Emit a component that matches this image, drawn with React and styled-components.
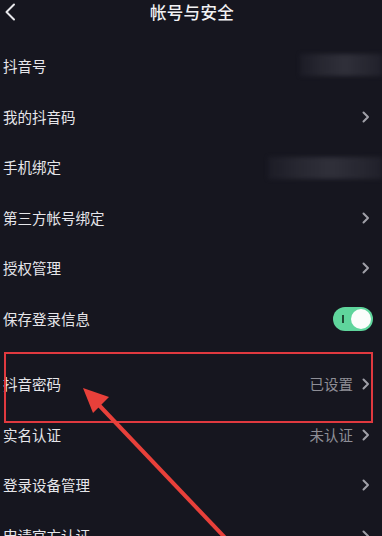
import React from 'react';
import styled, { createGlobalStyle } from 'styled-components';

const GlobalStyle = createGlobalStyle`
    html, body {
        margin: 0;
        padding: 0;
        background: #16161f;
    }
    body {
        font-family: "Noto Sans CJK SC", "Noto Sans", sans-serif;
        overflow: hidden;
    }
`

const Page = styled.div`
    position: relative;
    width: 382px;
    height: 536px;
    overflow: hidden;
    background: #16161f;
    color: #e6e6ea;
`

const Header = styled.div`
    position: relative;
    height: 24px;
    display: flex;
    align-items: center;
    justify-content: center;
    margin-bottom: 17px;
`

const BackButton = styled.div`
    position: absolute;
    left: 3px;
    top: 3px;
    width: 14px;
    height: 18px;
    display: flex;
`

const Title = styled.div`
    font-size: 16.5px;
    font-weight: 500;
    color: #f2f2f4;
    letter-spacing: 0.3px;
    line-height: 24px;
    margin-left: 2px;
`

const List = styled.div`
    display: flex;
    flex-direction: column;
`

const Row = styled.div`
    position: relative;
    height: 50.5px;
    display: flex;
    align-items: center;
    justify-content: space-between;
    padding-left: 3px;
    padding-right: 12px;
    margin-top: ${props => (props.gap ? '15px' : '0')};
`

const Label = styled.div`
    font-size: 14.5px;
    color: #e6e6ea;
    line-height: 20px;
`

const Right = styled.div`
    display: flex;
    align-items: center;
    gap: 9px;
`

const Value = styled.span`
    font-size: 14.5px;
    color: #8e8e96;
    line-height: 20px;
`

const Blurred = styled.div`
    position: relative;
    width: ${props => props.w}px;
    height: 22px;
    margin-right: -12px;
    margin-top: ${props => props.offset || 0}px;
    background: linear-gradient(90deg, #1d1d27 0%, #2b2b35 30%, #33333d 55%, #2a2a34 80%, #22222c 100%);
    filter: blur(2px);
    opacity: 0.9;
`

const Toggle = styled.div`
    position: relative;
    width: 40px;
    height: 24px;
    border-radius: 12px;
    background: #5fd59c;
    margin-right: -3px;
`

const ToggleMark = styled.div`
    position: absolute;
    left: 9px;
    top: 8px;
    width: 1.5px;
    height: 8px;
    background: #1f4a34;
`

const Knob = styled.div`
    position: absolute;
    right: 2px;
    top: 2px;
    width: 20px;
    height: 20px;
    border-radius: 50%;
    background: #fbfdfb;
`

const Highlight = styled.div`
    position: absolute;
    left: 4px;
    top: 352px;
    width: 369px;
    height: 71px;
    border: 2.5px solid #e0393f;
    box-sizing: border-box;
    pointer-events: none;
`

const ArrowLayer = styled.svg`
    position: absolute;
    left: 0;
    top: 0;
    pointer-events: none;
`

function Chevron() {
    return (
        <svg width="8" height="12" viewBox="0 0 8 12">
            <path d="M1.5 1.5 L6 6 L1.5 10.5" fill="none" stroke="#a0a0a8" strokeWidth="2" strokeLinecap="round" strokeLinejoin="round" />
        </svg>
    );
}

const rows = [
    { label: '抖音号', blur: 82, offset: -3 },
    { label: '我的抖音码', chevron: true },
    { label: '手机绑定', blur: 114, offset: 2 },
    { label: '第三方帐号绑定', chevron: true },
    { label: '授权管理', chevron: true },
    { label: '保存登录信息', toggle: true },
    { label: '抖音密码', value: '已设置', chevron: true, gap: true },
    { label: '实名认证', value: '未认证', chevron: true },
    { label: '登录设备管理', chevron: true },
    { label: '申请官方认证', chevron: true },
];

export default function App() {
    return (
        <Page>
            <GlobalStyle />
            <Header>
                <BackButton>
                    <svg width="14" height="18" viewBox="0 0 14 18">
                        <path d="M11 1.5 L3.5 9 L11 16.5" fill="none" stroke="#e8e8ec" strokeWidth="2" strokeLinecap="round" strokeLinejoin="round" />
                    </svg>
                </BackButton>
                <Title>帐号与安全</Title>
            </Header>
            <List>
                {rows.map(row => (
                    <Row key={row.label} gap={row.gap ? 1 : 0}>
                        <Label>{row.label}</Label>
                        <Right>
                            {row.value && <Value>{row.value}</Value>}
                            {row.blur && <Blurred w={row.blur} offset={row.offset} />}
                            {row.toggle && (
                                <Toggle>
                                    <ToggleMark />
                                    <Knob />
                                </Toggle>
                            )}
                            {row.chevron && <Chevron />}
                        </Right>
                    </Row>
                ))}
            </List>
            <Highlight />
            <ArrowLayer width="382" height="536" viewBox="0 0 382 536">
                <line x1="232" y1="545" x2="96" y2="402" stroke="#e8403a" strokeWidth="4" />
                <polygon points="83,388 109,397 93,413" fill="#e8403a" />
            </ArrowLayer>
        </Page>
    );
}
